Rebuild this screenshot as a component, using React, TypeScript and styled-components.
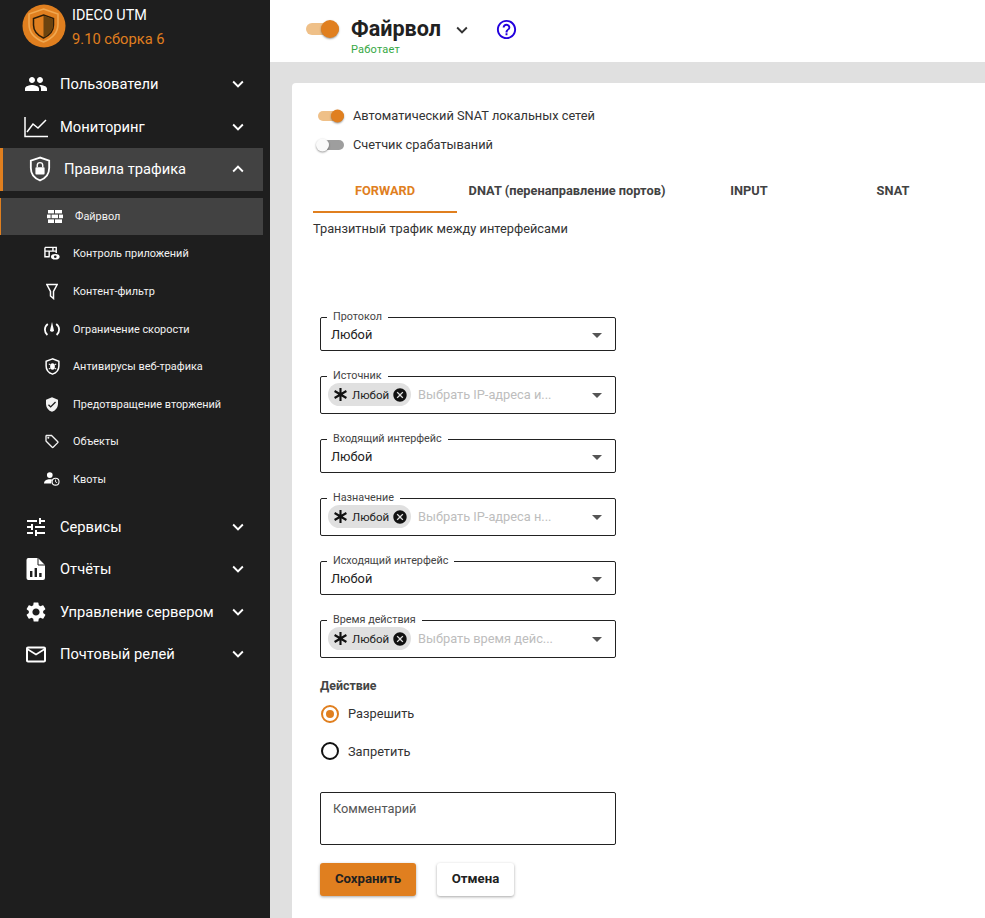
import React from 'react'
import styled, { createGlobalStyle } from 'styled-components'
import {
  MdPeople,
  MdTune,
  MdSettings,
  MdMailOutline,
  MdKeyboardArrowDown,
  MdKeyboardArrowUp,
  MdArrowDropDown,
  MdCancel,
  MdVerifiedUser,
  MdOutlineLocalOffer,
  MdHelpOutline,
} from 'react-icons/md'

const ORANGE = '#e07f1f'

const GlobalStyle = createGlobalStyle`
  html, body {
    margin: 0;
    padding: 0;
    height: 100%;
    overflow: hidden;
  }
  body {
    font-family: Roboto, "Noto Sans", sans-serif;
    background: #e0e0e0;
  }
`

const LogoIcon = () => (
  <svg width="44" height="44" viewBox="0 0 44 44">
    <circle cx="22" cy="22" r="21.5" fill={ORANGE} />
    <path d="M21.5 5 L36 10 V20 C36 29 29 35 21.5 38 C14 35 7 29 7 20 V10 Z" fill="none" stroke="#f0a850" strokeWidth="1.6" />
    <path d="M21.5 11 L31.5 14.5 V21 C31.5 27 27 31.5 21.5 34 C16 31.5 11.5 27 11.5 21 V14.5 Z" fill={ORANGE} stroke="#2b1c08" strokeWidth="1.5" />
    <path d="M21.5 11.6 L31 14.9 V21 C31 26.7 26.8 31 21.5 33.4 Z" fill="#6b430f" />
  </svg>
)

const ChartIcon = () => (
  <svg width="24" height="24" viewBox="0 0 24 24" fill="none" stroke="#fff" strokeWidth="1.5">
    <path d="M1 2 V21.5 H24" />
    <path d="M3 17 L9 9 L14 13 L22 5" />
  </svg>
)

const ShieldLockIcon = () => (
  <svg width="22" height="26" viewBox="0 0 24 28">
    <path d="M12 1.5 L2 5 V13 C2 20 6.5 24.5 12 26.5 C17.5 24.5 22 20 22 13 V5 Z" fill="none" stroke="#fff" strokeWidth="2" />
    <rect x="7" y="12" width="10" height="8" rx="1" fill="#fff" />
    <path d="M9 12 V10 A3 3 0 0 1 15 10 V12" fill="none" stroke="#fff" strokeWidth="1.5" />
  </svg>
)

const ReportIcon = () => (
  <svg width="24" height="24" viewBox="0 0 20 24">
    <path d="M2 1 H12 L19 8 V21 A2 2 0 0 1 17 23 H2 A2 2 0 0 1 0.5 21 V3 A2 2 0 0 1 2 1 Z" fill="#fff" />
    <path d="M12 1 V8 H19" fill="none" stroke="#1e1e1e" strokeWidth="1" />
    <path d="M4 14 h2.4 v6 H4 Z M8.6 11 h2.4 v9 H8.6 Z M13.2 16 h2.4 v4 h-2.4 Z" fill="#1e1e1e" />
  </svg>
)

const WallIcon = () => (
  <svg width="16" height="13" viewBox="0 0 16 13" fill="#fff">
    <rect x="1" y="0" width="6" height="3.4" />
    <rect x="8" y="0" width="7" height="3.4" />
    <rect x="0" y="4.6" width="3.6" height="3.6" />
    <rect x="4.6" y="4.6" width="6.4" height="3.6" />
    <rect x="12" y="4.6" width="4" height="3.6" />
    <rect x="1" y="9.4" width="6" height="3.6" />
    <rect x="8" y="9.4" width="7" height="3.6" />
  </svg>
)

const AppControlIcon = () => (
  <svg width="17" height="15" viewBox="0 0 17 15">
    <path d="M1 1 H13 V7 M6 11 H1 V1 M1 5 H13 M5.5 5 V11 M9.5 1 V5" fill="none" stroke="#fff" strokeWidth="1.5" />
    <ellipse cx="12" cy="11" rx="4.6" ry="3" fill="#fff" />
    <circle cx="12" cy="11" r="1.4" fill="#1e1e1e" />
  </svg>
)

const FilterIcon = () => (
  <svg width="12" height="17" viewBox="0 0 12 17" fill="none" stroke="#fff" strokeWidth="1.5">
    <path d="M0.8 1.5 H11.2 L7.5 8.5 V15.5 L4.5 13 V8.5 Z" />
  </svg>
)

const SpeedIcon = () => (
  <svg width="16" height="16" viewBox="0 0 16 16" fill="none" stroke="#fff" strokeWidth="1.8">
    <path d="M3.8 3 A7 7 0 0 0 3.4 14" />
    <path d="M12.2 3 A7 7 0 0 1 12.6 14" />
    <path d="M8 1 L10 9.4 A2.1 2.1 0 0 1 6 9.4 Z" fill="#fff" stroke="none" />
  </svg>
)

const BugShieldIcon = () => (
  <svg width="15" height="17" viewBox="0 0 14 16">
    <path d="M7 0.8 L1 3 V7.5 C1 11.2 3.6 14 7 15.2 C10.4 14 13 11.2 13 7.5 V3 Z" fill="none" stroke="#fff" strokeWidth="1.4" />
    <ellipse cx="7" cy="8" rx="2.2" ry="3" fill="#fff" />
    <path d="M3.5 5.5 L5 6.5 M10.5 5.5 L9 6.5 M3.5 10.5 L5 9.5 M10.5 10.5 L9 9.5" stroke="#fff" strokeWidth="1" />
  </svg>
)

const QuotaIcon = () => (
  <svg width="18" height="16" viewBox="0 0 18 16">
    <circle cx="6.5" cy="3.6" r="3.2" fill="#fff" />
    <path d="M0 13 C0 10 3.5 8.4 6.5 8.4 C7.6 8.4 8.5 8.6 9.3 8.8 C8.4 9.9 8 11.4 8.3 13 Z" fill="#fff" />
    <circle cx="13" cy="11" r="3.9" fill="none" stroke="#fff" strokeWidth="1.2" />
    <path d="M13 8.6 V11.2 L14.8 12.2" fill="none" stroke="#fff" strokeWidth="1" />
  </svg>
)

const AsteriskIcon = () => (
  <svg width="15" height="15" viewBox="0 0 15 15" stroke="#111" strokeWidth="2.1">
    <path d="M7.5 1 V14 M1.6 4 L13.4 11 M13.4 4 L1.6 11" />
  </svg>
)

const Layout = styled.div`
  display: flex;
  width: 985px;
  height: 918px;
  overflow: hidden;
`

const Sidebar = styled.aside`
  flex: 0 0 270px;
  background: #1e1e1e;
  color: #fff;
`

const Brand = styled.div`
  display: flex;
  align-items: flex-start;
  gap: 6px;
  height: 63px;
  padding: 4px 0 0 22px;
  box-sizing: border-box;
`

const BrandText = styled.div`
  display: flex;
  flex-direction: column;
  padding-top: 3px;
`

const BrandTitle = styled.div`
  font-size: 14.4px;
  line-height: 18px;
`

const BrandVersion = styled.div`
  margin-top: 3px;
  font-size: 14.7px;
  line-height: 22px;
  color: ${ORANGE};
`

const NavGroup = styled.div<{ $active?: boolean }>`
  display: flex;
  align-items: center;
  width: 263px;
  height: 42.5px;
  box-sizing: border-box;
  padding-left: ${p => (p.$active ? '25px' : '24px')};
  padding-right: 14px;
  font-size: 14.7px;
  color: #fff;
  background: ${p => (p.$active ? '#424242' : 'transparent')};
  border-left: ${p => (p.$active ? `3px solid ${ORANGE}` : '0')};
`

const NavIcon = styled.span`
  display: flex;
  justify-content: center;
  width: 24px;
  margin-right: 12px;
`

const NavLabel = styled.span`
  flex: 1;
  white-space: nowrap;
`

const Chevron = styled.span`
  display: flex;
  font-size: 22px;
`

const SubList = styled.div`
  display: flex;
  flex-direction: column;
  margin-top: 7px;
  margin-bottom: 7px;
`

const SubItem = styled.div<{ $active?: boolean }>`
  display: flex;
  align-items: center;
  width: 263px;
  height: 37.6px;
  box-sizing: border-box;
  padding-left: ${p => (p.$active ? '43px' : '44px')};
  font-size: 10.9px;
  color: #f2f2f2;
  background: ${p => (p.$active ? '#424242' : 'transparent')};
  border-left: ${p => (p.$active ? `1px solid ${ORANGE}` : '0')};
`

const SubIcon = styled.span<{ $active?: boolean }>`
  display: flex;
  justify-content: center;
  width: 16px;
  margin-left: ${p => (p.$active ? '3px' : '0')};
  margin-right: ${p => (p.$active ? '12px' : '13px')};
`

const Main = styled.main`
  flex: 1;
  min-width: 0;
  display: flex;
  flex-direction: column;
`

const TopBar = styled.header`
  display: flex;
  align-items: flex-start;
  height: 62px;
  box-sizing: border-box;
  padding: 23px 0 0 36px;
  background: #fff;
`

const TitleBlock = styled.div`
  display: flex;
  flex-direction: column;
  margin-left: 12px;
  margin-top: -6px;
`

const Title = styled.h1`
  margin: 0;
  font-size: 21.6px;
  line-height: 24px;
  font-weight: 700;
  color: #212121;
`

const Status = styled.div`
  font-size: 11px;
  line-height: 13px;
  margin-top: 2px;
  letter-spacing: 0.2px;
  color: #36a844;
`

const TitleChevron = styled.span`
  display: flex;
  margin: -4px 0 0 10px;
  font-size: 22px;
  color: #333;
`

const HelpButton = styled.span`
  display: flex;
  margin: -5px 0 0 22px;
  font-size: 23px;
  color: #2200dd;
`

const Card = styled.section`
  flex: 1;
  margin: 21px 0 0 22px;
  padding: 18px 20px 0 21px;
  background: #fff;
  border-radius: 4px 0 0 0;
`

const SwitchRow = styled.div`
  display: flex;
  align-items: center;
  height: 29px;
  padding-left: 5px;
  font-size: 12.8px;
  color: #333;
`

const SwitchTrack = styled.span<{ $on?: boolean; $large?: boolean }>`
  position: relative;
  display: block;
  flex: none;
  width: ${p => (p.$large ? '33px' : '26px')};
  height: ${p => (p.$large ? '12px' : '10px')};
  border-radius: 6px;
  background: ${p => (p.$on ? '#efc088' : '#9e9e9e')};
`

const SwitchThumb = styled.span<{ $on?: boolean; $large?: boolean }>`
  position: absolute;
  top: 50%;
  ${p => (p.$on ? 'right: 0;' : 'left: -2px;')}
  width: ${p => (p.$large ? '18px' : '13px')};
  height: ${p => (p.$large ? '18px' : '13px')};
  border-radius: 50%;
  transform: translateY(-50%);
  background: ${p => (p.$on ? ORANGE : '#fafafa')};
  box-shadow: 0 1px 2px rgba(0, 0, 0, 0.4);
`

const SwitchLabel = styled.span`
  margin-left: 9px;
`

const Tabs = styled.nav`
  display: flex;
  height: 42px;
  margin-top: 12px;
`

const Tab = styled.div<{ $active?: boolean; $wide?: boolean }>`
  flex: 0 0 ${p => (p.$wide ? '220px' : '144px')};
  box-sizing: border-box;
  padding-top: 12px;
  text-align: center;
  font-size: 12.8px;
  font-weight: 700;
  white-space: nowrap;
  color: ${p => (p.$active ? ORANGE : '#424242')};
  border-bottom: 2px solid ${p => (p.$active ? ORANGE : 'transparent')};
`

const Description = styled.p`
  margin: 8px 0 0;
  font-size: 12.8px;
  line-height: 15px;
  color: #333;
`

const Form = styled.form`
  display: flex;
  flex-direction: column;
  width: 296px;
  margin: 81px 0 0 7px;
`

const Fields = styled.div`
  display: flex;
  flex-direction: column;
  gap: 25px;
`

const Field = styled.div<{ $chips?: boolean }>`
  position: relative;
  display: flex;
  align-items: center;
  height: ${p => (p.$chips ? '38px' : '34px')};
  box-sizing: border-box;
  padding: ${p => (p.$chips ? '0 0 1px 7px' : '1px 0 0 10px')};
  border: 1px solid #222;
  border-radius: 2px;
  font-size: 12.8px;
  color: #222;
`

const FieldLabel = styled.span`
  position: absolute;
  top: -7px;
  left: 6px;
  padding: 0 6px;
  font-size: 10.8px;
  line-height: 12px;
  color: #444;
  background: #fff;
`

const FieldValue = styled.span`
  flex: 1;
`

const Arrow = styled.span`
  display: flex;
  margin-right: 6px;
  font-size: 24px;
  color: #555;
`

const Chip = styled.span`
  display: flex;
  align-items: center;
  flex: none;
  height: 23px;
  box-sizing: border-box;
  padding: 0 3px 0 5px;
  border-radius: 12px;
  background: #e0e0e0;
  font-size: 11.5px;
  color: #222;
`

const ChipText = styled.span`
  margin: 0 3px 0 4px;
`

const ChipClose = styled.span`
  display: flex;
  font-size: 16px;
  color: #111;
`

const Placeholder = styled.span`
  flex: 1;
  margin-left: 7px;
  font-size: 12.8px;
  color: #bdbdbd;
  white-space: nowrap;
`

const ActionTitle = styled.div`
  margin-top: 20px;
  font-size: 12.4px;
  line-height: 15px;
  font-weight: 700;
  color: #444;
`

const RadioRow = styled.div`
  display: flex;
  align-items: center;
  height: 37.5px;
  font-size: 12.8px;
  color: #333;
`

const RadioFirst = styled(RadioRow)`
  margin-top: 2px;
`

const RadioCircle = styled.span<{ $checked?: boolean }>`
  display: flex;
  align-items: center;
  justify-content: center;
  width: 18px;
  height: 18px;
  box-sizing: border-box;
  margin: 0 9px 0 1px;
  border-radius: 50%;
  border: 2px solid ${p => (p.$checked ? ORANGE : '#111')};
`

const RadioDot = styled.span`
  width: 8px;
  height: 8px;
  border-radius: 50%;
  background: ${ORANGE};
`

const Comment = styled.div`
  height: 53px;
  box-sizing: border-box;
  margin-top: 22px;
  padding: 8px 12px;
  border: 1px solid #222;
  border-radius: 2px;
  font-size: 12.8px;
  line-height: 15px;
  color: #555;
`

const Buttons = styled.div`
  display: flex;
  gap: 21px;
  margin-top: 18px;
`

const Button = styled.button<{ $primary?: boolean }>`
  width: ${p => (p.$primary ? '96px' : '77px')};
  height: 33px;
  padding: 0;
  border: 0;
  border-radius: 3px;
  font-family: inherit;
  font-size: 13.2px;
  font-weight: 700;
  color: #212121;
  background: ${p => (p.$primary ? ORANGE : '#fff')};
  box-shadow: 0 1px 3px rgba(0, 0, 0, 0.35);
`

const ButtonLabel = styled.span`
  position: relative;
  top: -1px;
`

interface SubEntry {
  label: string
  icon: React.ReactNode
  active?: boolean
}

const subItems: SubEntry[] = [
  { label: 'Файрвол', icon: <WallIcon />, active: true },
  { label: 'Контроль приложений', icon: <AppControlIcon /> },
  { label: 'Контент-фильтр', icon: <FilterIcon /> },
  { label: 'Ограничение скорости', icon: <SpeedIcon /> },
  { label: 'Антивирусы веб-трафика', icon: <BugShieldIcon /> },
  { label: 'Предотвращение вторжений', icon: <MdVerifiedUser size={19} /> },
  { label: 'Объекты', icon: <MdOutlineLocalOffer size={19} /> },
  { label: 'Квоты', icon: <QuotaIcon /> },
]

const Group: React.FC<{ label: string; icon: React.ReactNode; open?: boolean }> = ({ label, icon, open }) => (
  <NavGroup $active={open}>
    <NavIcon>{icon}</NavIcon>
    <NavLabel>{label}</NavLabel>
    <Chevron>{open ? <MdKeyboardArrowUp /> : <MdKeyboardArrowDown />}</Chevron>
  </NavGroup>
)

const SelectField: React.FC<{ label: string; value: string }> = ({ label, value }) => (
  <Field>
    <FieldLabel>{label}</FieldLabel>
    <FieldValue>{value}</FieldValue>
    <Arrow><MdArrowDropDown /></Arrow>
  </Field>
)

const ChipField: React.FC<{ label: string; placeholder: string }> = ({ label, placeholder }) => (
  <Field $chips>
    <FieldLabel>{label}</FieldLabel>
    <Chip>
      <AsteriskIcon />
      <ChipText>Любой</ChipText>
      <ChipClose><MdCancel /></ChipClose>
    </Chip>
    <Placeholder>{placeholder}</Placeholder>
    <Arrow><MdArrowDropDown /></Arrow>
  </Field>
)

const Switch: React.FC<{ on?: boolean; large?: boolean }> = ({ on, large }) => (
  <SwitchTrack $on={on} $large={large}>
    <SwitchThumb $on={on} $large={large} />
  </SwitchTrack>
)

const App: React.FC = () => (
  <Layout>
    <GlobalStyle />
    <Sidebar>
      <Brand>
        <LogoIcon />
        <BrandText>
          <BrandTitle>IDECO UTM</BrandTitle>
          <BrandVersion>9.10 сборка 6</BrandVersion>
        </BrandText>
      </Brand>
      <Group label="Пользователи" icon={<MdPeople size={26} />} />
      <Group label="Мониторинг" icon={<ChartIcon />} />
      <Group label="Правила трафика" icon={<ShieldLockIcon />} open />
      <SubList>
        {subItems.map(item => (
          <SubItem key={item.label} $active={item.active}>
            <SubIcon $active={item.active}>{item.icon}</SubIcon>
            {item.label}
          </SubItem>
        ))}
      </SubList>
      <Group label="Сервисы" icon={<MdTune size={28} />} />
      <Group label="Отчёты" icon={<ReportIcon />} />
      <Group label="Управление сервером" icon={<MdSettings size={28} />} />
      <Group label="Почтовый релей" icon={<MdMailOutline size={27} />} />
    </Sidebar>
    <Main>
      <TopBar>
        <Switch on large />
        <TitleBlock>
          <Title>Файрвол</Title>
          <Status>Работает</Status>
        </TitleBlock>
        <TitleChevron><MdKeyboardArrowDown /></TitleChevron>
        <HelpButton><MdHelpOutline /></HelpButton>
      </TopBar>
      <Card>
        <SwitchRow>
          <Switch on />
          <SwitchLabel>Автоматический SNAT локальных сетей</SwitchLabel>
        </SwitchRow>
        <SwitchRow>
          <Switch />
          <SwitchLabel>Счетчик срабатываний</SwitchLabel>
        </SwitchRow>
        <Tabs>
          <Tab $active>FORWARD</Tab>
          <Tab $wide>DNAT (перенаправление портов)</Tab>
          <Tab>INPUT</Tab>
          <Tab>SNAT</Tab>
        </Tabs>
        <Description>Транзитный трафик между интерфейсами</Description>
        <Form>
          <Fields>
            <SelectField label="Протокол" value="Любой" />
            <ChipField label="Источник" placeholder="Выбрать IP-адреса и..." />
            <SelectField label="Входящий интерфейс" value="Любой" />
            <ChipField label="Назначение" placeholder="Выбрать IP-адреса н..." />
            <SelectField label="Исходящий интерфейс" value="Любой" />
            <ChipField label="Время действия" placeholder="Выбрать время дейс..." />
          </Fields>
          <ActionTitle>Действие</ActionTitle>
          <RadioFirst>
            <RadioCircle $checked><RadioDot /></RadioCircle>
            Разрешить
          </RadioFirst>
          <RadioRow>
            <RadioCircle />
            Запретить
          </RadioRow>
          <Comment>Комментарий</Comment>
          <Buttons>
            <Button type="button" $primary><ButtonLabel>Сохранить</ButtonLabel></Button>
            <Button type="button"><ButtonLabel>Отмена</ButtonLabel></Button>
          </Buttons>
        </Form>
      </Card>
    </Main>
  </Layout>
)

export default App
